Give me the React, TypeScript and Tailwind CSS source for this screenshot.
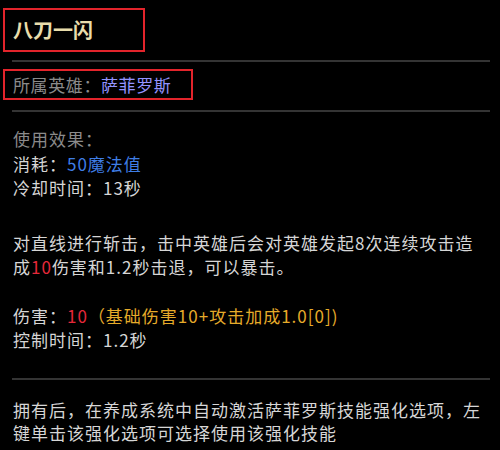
import React from "react";

const Divider = ({ cls }: { cls: string }) => (
  <div className={`ml-[12px] w-[478px] h-[2px] bg-[#343434] ${cls}`} />
);

export default function App() {
  return (
    <div
      className="w-[500px] h-[450px] bg-black overflow-hidden flex flex-col text-[17px] tracking-[1px] text-[#d6d6d6]"
      style={{ fontFamily: '"Noto Sans CJK SC", "Noto Sans", sans-serif' }}
    >
      <div className="ml-[3px] mt-[8px] w-[142px] h-[44px] border-2 border-[#e3242b] flex items-center pl-[8px] shrink-0">
        <span className="text-[20px] font-bold tracking-[0px] text-[#e9ddab] leading-none">八刀一闪</span>
      </div>
      <Divider cls="mt-[8px] shrink-0" />
      <div className="ml-[3px] mt-[7px] w-[190px] h-[31px] border-2 border-[#e3242b] flex items-center pl-[8px] shrink-0 whitespace-nowrap tracking-[0.6px]">
        <span className="text-[#8b8b8b]">所属英雄：</span>
        <span className="text-[#9393ff]">萨菲罗斯</span>
      </div>
      <Divider cls="mt-[10px] shrink-0" />
      <div className="ml-[13px] mt-[15px] leading-[24.5px] whitespace-nowrap">
        <div className="text-[#8b8b8b]">使用效果：</div>
        <div>
          消耗：<span className="text-[#3f7ee6]">50魔法值</span>
        </div>
        <div>冷却时间：13秒</div>
      </div>
      <div className="ml-[13px] mt-[30px] leading-[24px] whitespace-nowrap">
        对直线进行斩击，击中英雄后会对英雄发起8次连续攻击造
        <br />
        成<span className="text-[#e5283a]">10</span>伤害和1.2秒击退，可以暴击。
      </div>
      <div className="ml-[13px] mt-[25px] leading-[24.5px] whitespace-nowrap">
        <div>
          伤害：<span className="text-[#e5283a]">10</span>
          <span className="text-[#e6ab2a]">（基础伤害10+攻击加成1.0[0])</span>
        </div>
        <div>控制时间：1.2秒</div>
      </div>
      <Divider cls="mt-[25px] shrink-0" />
      <div className="ml-[13px] mt-[18px] leading-[23.5px] whitespace-nowrap">
        拥有后，在养成系统中自动激活萨菲罗斯技能强化选项，左
        <br />
        键单击该强化选项可选择使用该强化技能
      </div>
    </div>
  );
}
